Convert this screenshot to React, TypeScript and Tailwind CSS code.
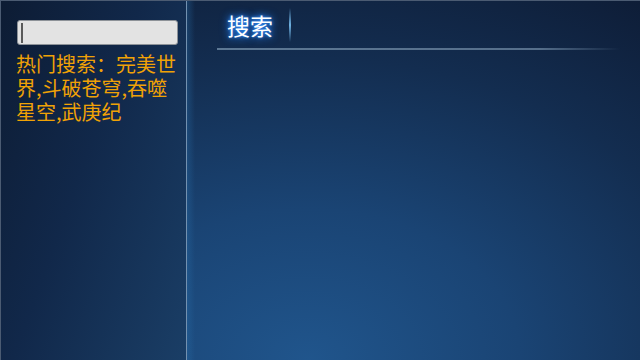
export default function App() {
  return (
    <div
      className="flex w-[640px] h-[360px] overflow-hidden border-t border-l border-[#4b5b72] bg-[radial-gradient(ellipse_95%_120%_at_48%_100%,#20558c_0%,#1a4474_35%,#132d50_70%,#0e1d37_100%)]"
      style={{ fontFamily: '"Noto Sans CJK SC", "Noto Sans", sans-serif' }}
    >
      {/* Left panel */}
      <aside className="w-[186px] shrink-0 h-full flex flex-col border-r border-[#7391b0] bg-[linear-gradient(110deg,#0d1c34_0%,#11284a_45%,#1a3e66_100%)]">
        <div className="mt-[19px] ml-[16px] w-[161px] h-[25px] rounded-[3px] border border-[#8d9298] bg-[#e3e3e3] flex items-center pl-[3px]">
          <span className="block w-[2px] h-[20px] bg-[#5a5a5a]" />
        </div>
        <p className="mt-[7px] ml-[15px] w-[164px] text-[20px] leading-[24px] text-[#f0a206]">
          热门搜索：完美世界,斗破苍穹,吞噬星空,武庚纪
        </p>
      </aside>

      {/* Main area */}
      <main className="flex-1 h-full flex flex-col bg-[linear-gradient(90deg,rgba(40,110,170,0.35)_0px,rgba(40,110,170,0)_8px)]">
        <header className="h-[47px] flex items-center pl-[40px] pt-[1px]">
          <span className="text-[23px] leading-none text-white [text-shadow:0_0_3px_#3a95ff,0_0_7px_#1f6fd8,0_0_10px_#1f6fd8]">
            搜索
          </span>
          <span className="ml-[16px] w-[2px] h-[34px] bg-[linear-gradient(180deg,rgba(110,175,225,0)_0%,#6fb2e2_50%,rgba(110,175,225,0)_100%)]" />
        </header>
        <div className="ml-[30px] mr-[20px] h-[2px] bg-[linear-gradient(90deg,#5d7894_0%,#566f8b_80%,rgba(86,111,139,0)_100%)]" />
      </main>
    </div>
  )
}
